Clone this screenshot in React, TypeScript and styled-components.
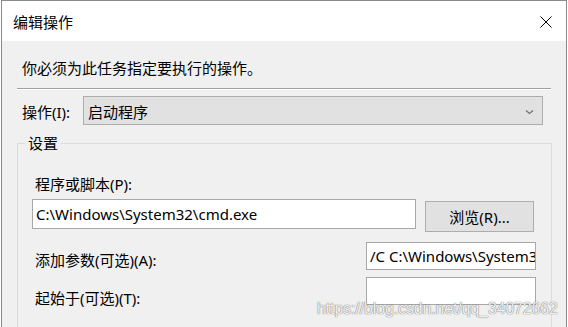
import styled, { createGlobalStyle } from "styled-components";

const GlobalStyle = createGlobalStyle`
    html, body {
        margin: 0;
        padding: 0;
        background: #ffffff;
        overflow: hidden;
    }
    body {
        font-family: "Noto Sans", "Noto Sans CJK SC", sans-serif;
        font-size: 15px;
        color: #000;
    }
`;

const Window = styled.div`
    position: relative;
    box-sizing: border-box;
    margin-left: 1px;
    width: 566px;
    height: 360px;
    border: 1px solid #8a8a8a;
    background: #f0f0f0;
`;

const TitleBar = styled.div`
    height: 40px;
    background: #ffffff;
    display: flex;
    align-items: center;
    justify-content: space-between;
    padding: 0 13px 0 11px;
`;

const Title = styled.div`
    font-size: 15px;
    line-height: 20px;
    margin-top: 2px;
`;

const CloseButton = styled.div`
    width: 14px;
    height: 14px;
    display: flex;
    align-items: center;
    justify-content: center;
    margin-top: 2px;
`;

const Body = styled.div`
    padding: 17px 14px 0 15px;
`;

const Instruction = styled.div`
    line-height: 20px;
    padding-left: 5px;
`;

const Separator = styled.div`
    margin-top: 10px;
    width: 534px;
    border-top: 1px solid #a0a0a0;
    border-bottom: 1px solid #ffffff;
`;

const ActionRow = styled.div`
    display: flex;
    align-items: center;
    margin-top: 6px;
`;

const Label = styled.div<{ $offset?: number }>`
    line-height: 20px;
    white-space: nowrap;
    padding-top: ${(p) => p.$offset ?? 0}px;
`;

const ActionLabel = styled(Label)`
    width: 66px;
    padding-left: 5px;
    box-sizing: border-box;
`;

const Combo = styled.div`
    box-sizing: border-box;
    width: 460px;
    height: 29px;
    background: #e1e1e1;
    border: 1px solid #adadad;
    display: flex;
    align-items: center;
    justify-content: space-between;
    padding: 3px 8px 0 4px;
    line-height: 20px;
`;

const Group = styled.fieldset`
    margin: 8px 0 0 0;
    width: 535px;
    box-sizing: border-box;
    height: 260px;
    border: 1px solid #dcdcdc;
    padding: 21px 14px 0 14px;
`;

const Legend = styled.legend`
    margin-left: -7px;
    padding: 0 3px;
    line-height: 20px;
`;

const FieldLabel = styled(Label)`
    padding-left: 3px;
`;

const ProgramRow = styled.div`
    display: flex;
    align-items: flex-start;
    margin-top: 5px;
`;

const TextBox = styled.div<{ $width: number; $height: number }>`
    box-sizing: border-box;
    width: ${(p) => p.$width}px;
    height: ${(p) => p.$height}px;
    background: #ffffff;
    border: 1px solid #a8a8a8;
    padding: 0 3px;
    display: flex;
    align-items: center;
    overflow: hidden;
    white-space: nowrap;
    font-size: 15px;
    line-height: 20px;
`;

const Button = styled.div`
    box-sizing: border-box;
    width: 109px;
    height: 31px;
    margin: 2px 0 0 9px;
    background: #e1e1e1;
    border: 1px solid #adadad;
    display: flex;
    align-items: center;
    justify-content: center;
    padding-top: 1px;
    line-height: 20px;
`;

const OptionRow = styled.div<{ $gap: number }>`
    display: flex;
    align-items: flex-start;
    justify-content: space-between;
    width: 504px;
    margin-top: ${(p) => p.$gap}px;
`;

const Watermark = styled.div`
    position: absolute;
    left: 315px;
    top: 298px;
    font-family: "Liberation Sans", Arial, sans-serif;
    font-size: 15.7px;
    line-height: 20px;
    color: rgba(255, 255, 255, 0.92);
    text-shadow: 0 0 1px rgba(100, 100, 100, 0.9), 0 0 1px rgba(100, 100, 100, 0.7);
    white-space: nowrap;
`;

const Chevron = () => (
    <svg width="9" height="6" viewBox="0 0 9 6">
        <path d="M1 1.5 L4.5 4.5 L8 1.5" fill="none" stroke="#707070" strokeWidth="1.2" />
    </svg>
);

const CloseIcon = () => (
    <svg width="12" height="12" viewBox="0 0 12 12">
        <path d="M0.5 0.5 L11.5 11.5 M11.5 0.5 L0.5 11.5" stroke="#000" strokeWidth="1" />
    </svg>
);

export default function App() {
    return (
        <>
            <GlobalStyle />
            <Window>
                <TitleBar>
                    <Title>编辑操作</Title>
                    <CloseButton>
                        <CloseIcon />
                    </CloseButton>
                </TitleBar>
                <Body>
                    <Instruction>你必须为此任务指定要执行的操作。</Instruction>
                    <Separator />
                    <ActionRow>
                        <ActionLabel $offset={3}>操作(I):</ActionLabel>
                        <Combo>
                            <span>启动程序</span>
                            <Chevron />
                        </Combo>
                    </ActionRow>
                    <Group>
                        <Legend>设置</Legend>
                        <FieldLabel>程序或脚本(P):</FieldLabel>
                        <ProgramRow>
                            <TextBox $width={384} $height={30}>C:\Windows\System32\cmd.exe</TextBox>
                            <Button>浏览(R)...</Button>
                        </ProgramRow>
                        <OptionRow $gap={10}>
                            <FieldLabel $offset={8}>添加参数(可选)(A):</FieldLabel>
                            <TextBox $width={170} $height={28}>/C C:\Windows\System3</TextBox>
                        </OptionRow>
                        <OptionRow $gap={7}>
                            <FieldLabel $offset={11}>起始于(可选)(T):</FieldLabel>
                            <TextBox $width={170} $height={28} />
                        </OptionRow>
                    </Group>
                </Body>
                <Watermark>https://blog.csdn.net/qq_34072662</Watermark>
            </Window>
        </>
    );
}
